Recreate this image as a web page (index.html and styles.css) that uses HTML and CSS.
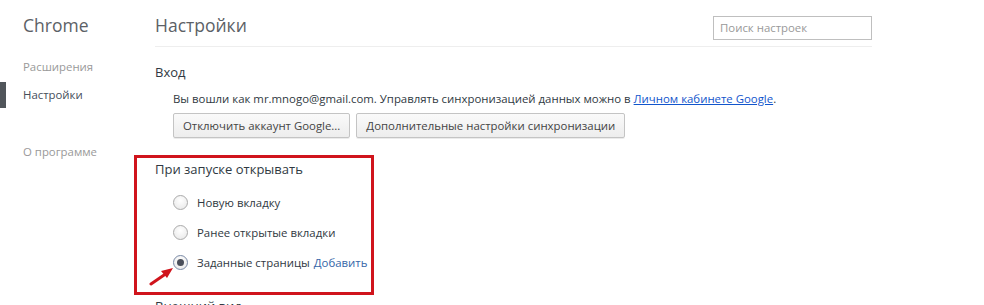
FILE: index.html
```html
<!DOCTYPE html>
<html lang="ru">
<head>
<meta charset="utf-8">
<link rel="stylesheet" href="styles.css">
</head>
<body>
<div class="page">
  <nav class="sidebar">
    <div class="brand">Chrome</div>
    <ul class="nav">
      <li class="nav-item">Расширения</li>
      <li class="nav-item selected">Настройки</li>
      <li class="nav-item about">О программе</li>
    </ul>
  </nav>
  <main class="main">
    <header class="header">
      <h1 class="title">Настройки</h1>
      <div class="search">Поиск настроек</div>
    </header>
    <section class="section">
      <h3 class="section-title">Вход</h3>
      <div class="section-body">
        <p class="text">Вы вошли как mr.mnogo@gmail.com. Управлять синхронизацией данных можно в <a class="link">Личном кабинете Google</a>.</p>
        <div class="buttons">
          <button class="btn">Отключить аккаунт Google...</button>
          <button class="btn">Дополнительные настройки синхронизации</button>
        </div>
      </div>
    </section>
    <section class="section startup">
      <h3 class="section-title">При запуске открывать</h3>
      <div class="radios">
        <label class="radio-row"><span class="radio"></span>Новую вкладку</label>
        <label class="radio-row"><span class="radio"></span>Ранее открытые вкладки</label>
        <label class="radio-row"><span class="radio checked"></span>Заданные страницы <a class="add">Добавить</a></label>
      </div>
      <svg class="arrow" width="30" height="24" viewBox="0 0 30 24">
        <path d="M2 20 L18 9" stroke="#d0141c" stroke-width="3" stroke-linecap="round" fill="none"/>
        <path d="M24 4 L12 7 L18 14 Z" fill="#d0141c"/>
      </svg>
    </section>
    <section class="section next">
      <h3 class="section-title">Внешний вид</h3>
    </section>
  </main>
</div>
</body>
</html>
```

FILE: styles.css
```css
html, body {
  margin: 0;
  padding: 0;
  background: #fff;
  overflow: hidden;
}
body {
  font-family: "Open Sans", "Noto Sans", sans-serif;
  color: #303942;
  font-size: 11.4px;
  width: 984px;
  height: 305px;
}
.page {
  display: flex;
}
.sidebar {
  width: 155px;
  flex: none;
}
.brand {
  font-size: 17.5px;
  color: #5c6166;
  padding: 13px 0 0 23px;
  line-height: 24px;
}
.nav {
  list-style: none;
  margin: 15px 0 0;
  padding: 0;
}
.nav-item {
  font-size: 11.4px;
  color: #999;
  padding-left: 23px;
  line-height: 29px;
}
.nav-item.selected {
  color: #464e5a;
  box-shadow: inset 6px 0 0 #50555a;
  line-height: 26px;
  margin-top: 1px;
}
.nav-item.about {
  margin-top: 29px;
}
.main {
  width: 717px;
  flex: none;
}
.header {
  display: flex;
  justify-content: space-between;
  align-items: flex-start;
  border-bottom: 1px solid #eeeeee;
  height: 46px;
}
.title {
  margin: 13px 0 0;
  font-size: 17.5px;
  font-weight: normal;
  color: #5c6166;
  line-height: 24px;
}
.search {
  margin-top: 16px;
  width: 151px;
  height: 22px;
  border: 1px solid #bfbfbf;
  padding-left: 6px;
  color: #999;
  font-size: 11.4px;
  line-height: 22px;
}
.section {
  position: relative;
}
.section-title {
  margin: 15px 0 0;
  font-size: 13px;
  font-weight: normal;
  color: #303942;
  line-height: 20px;
}
.section-body {
  padding-left: 18px;
}
.text {
  margin: 8px 0 0;
  line-height: 18px;
}
.link {
  color: #15c;
  text-decoration: underline;
}
.buttons {
  display: flex;
  gap: 6px;
  margin-top: 5px;
}
.btn {
  margin: 0;
  font-family: inherit;
  font-size: 11.4px;
  color: #444;
  height: 25px;
  padding: 0 9px;
  border: 1px solid #c4c4c4;
  border-radius: 2px;
  background: linear-gradient(#fafafa, #ededed);
  box-shadow: 0 1px 0 rgba(0,0,0,0.08);
}
.startup {
  margin: 17px 0 0 -21px;
  width: 216px;
  height: 134px;
  border: 3px solid #d0141c;
  padding-left: 18px;
  box-sizing: content-box;
}
.startup .section-title {
  margin-top: 1px;
}
.radios {
  padding-left: 18px;
  margin-top: 13px;
  display: flex;
  flex-direction: column;
  gap: 10px;
}
.radio-row {
  display: flex;
  align-items: center;
  gap: 9px;
  height: 20px;
}
.radio {
  width: 13px;
  height: 13px;
  border: 1px solid #aaa;
  border-radius: 50%;
  background: radial-gradient(circle at 50% 35%, #fff, #e6e6e6);
  box-sizing: content-box;
  position: relative;
}
.radio.checked {
  border-color: #7a8aa6;
}
.radio.checked::after {
  content: "";
  position: absolute;
  left: 3px;
  top: 3px;
  width: 7px;
  height: 7px;
  border-radius: 50%;
  background: #4a4f5a;
}
.add {
  color: #3566a8;
  margin-left: -5px;
}
.arrow {
  position: absolute;
  left: 12px;
  top: 106px;
}
.next .section-title {
  margin-top: 1px;
}
```
